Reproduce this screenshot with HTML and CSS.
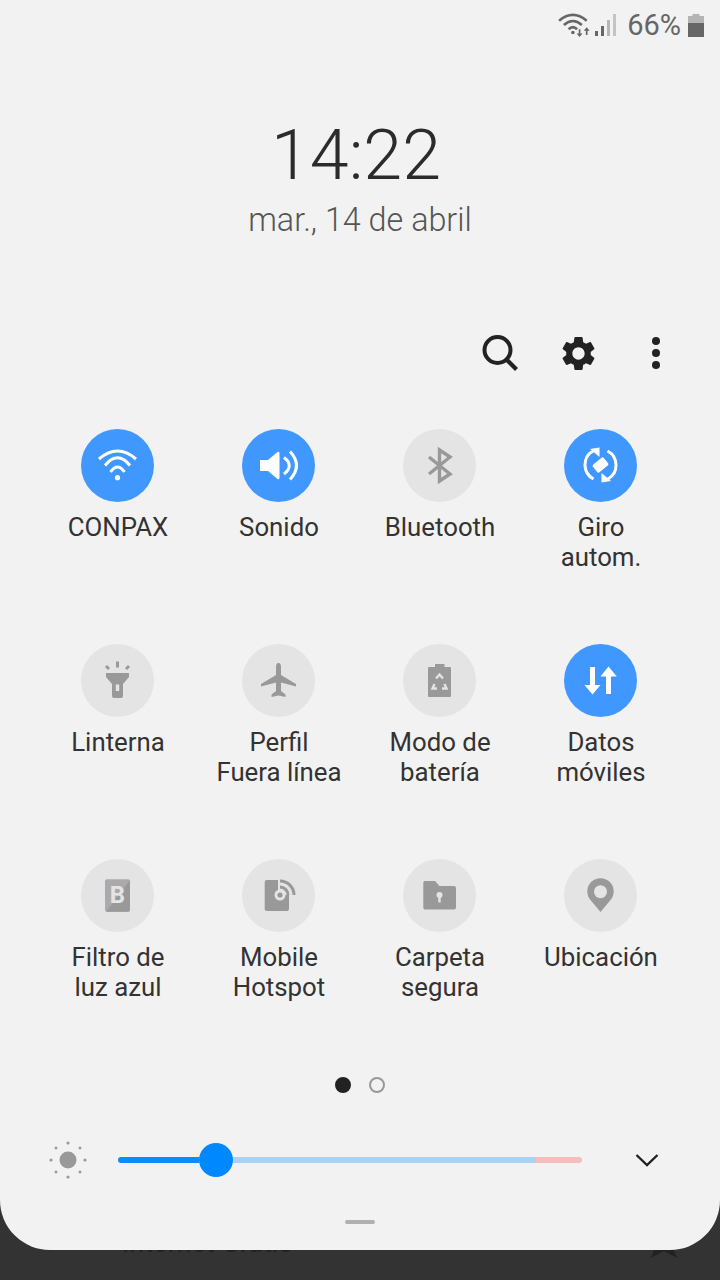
FILE: index.html
```html
<!DOCTYPE html>
<html lang="es">
<head>
    <meta charset="UTF-8">
    <meta name="viewport" content="width=device-width, initial-scale=1.0">
    <title>Panel rápido</title>
    <link rel="stylesheet" href="styles.css">
</head>
<body>

    <div class="panel">
        <!-- Status bar -->
        <div class="status-bar">
            <svg class="st-wifi" viewBox="0 0 32 26" width="34" height="28">
                <g fill="none" stroke="#666" stroke-width="2.4">
                    <path d="M1 9 Q14 -2 27 9"/>
                    <path d="M5.5 13 Q14 5.5 22.5 13"/>
                    <path d="M10 17 Q14 13 18 17"/>
                </g>
                <circle cx="14" cy="20" r="1.7" fill="#666"/>
                <path d="M19.5 17 h1.6 v4 h2 l-2.8 3.4 -2.8 -3.4 h2z" fill="#666"/>
                <path d="M27 15 l2.8 3.4 h-2 v4 h-1.6 v-4 h-2z" fill="#666"/>
            </svg>
            <svg class="st-signal" viewBox="0 0 22 24" width="22" height="24">
                <rect x="0" y="18" width="3" height="5" fill="#666"/>
                <rect x="6" y="13" width="3" height="10" fill="#666"/>
                <rect x="12" y="7" width="3" height="16" fill="#b5b5b5"/>
                <rect x="18" y="1" width="3" height="22" fill="#c4c4c4"/>
            </svg>
            <span class="st-level">66%</span>
            <svg class="st-battery" viewBox="0 0 16 23" width="16" height="23">
                <path d="M4.5 0 H11.5 V2 H16 V9 H0 V2 H4.5Z" fill="#b4b4b4"/>
                <rect x="0" y="9" width="16" height="14" fill="#666"/>
            </svg>
        </div>

        <!-- Clock -->
        <div class="clock">14:22</div>
        <div class="date">mar., 14 de abril</div>

        <!-- Toolbar -->
        <div class="toolbar">
            <button class="tool">
                <svg viewBox="0 0 40 40" width="40" height="40">
                    <circle cx="17.5" cy="17" r="13" fill="none" stroke="#222" stroke-width="4"/>
                    <path d="M27 27 L36.5 36.5" stroke="#222" stroke-width="4.2" fill="none"/>
                </svg>
            </button>
            <button class="tool">
                <svg viewBox="0 0 24 24" width="41" height="41">
                    <path fill="#222" d="M19.14 12.94c.04-.3.06-.61.06-.94 0-.32-.02-.64-.07-.94l2.03-1.58c.18-.14.23-.41.12-.61l-1.92-3.32c-.12-.22-.37-.29-.59-.22l-2.39.96c-.5-.38-1.03-.7-1.62-.94l-.36-2.54c-.04-.24-.24-.41-.48-.41h-3.84c-.24 0-.43.17-.47.41l-.36 2.54c-.59.24-1.13.57-1.62.94l-2.39-.96c-.22-.08-.47 0-.59.22L2.74 8.87c-.12.21-.08.47.12.61l2.03 1.58c-.05.3-.09.63-.09.94s.02.64.07.94l-2.03 1.58c-.18.14-.23.41-.12.61l1.92 3.32c.12.22.37.29.59.22l2.39-.96c.5.38 1.03.7 1.62.94l.36 2.54c.05.24.24.41.48.41h3.84c.24 0 .44-.17.47-.41l.36-2.54c.59-.24 1.13-.56 1.62-.94l2.39.96c.22.08.47 0 .59-.22l1.92-3.32c.12-.22.07-.47-.12-.61l-2.01-1.58zM12 15.6c-1.98 0-3.6-1.62-3.6-3.6s1.62-3.6 3.6-3.6 3.6 1.62 3.6 3.6-1.62 3.6-3.6 3.6z"/>
                </svg>
            </button>
            <button class="tool">
                <svg viewBox="0 0 12 34" width="12" height="34">
                    <circle cx="6" cy="5" r="4" fill="#222"/>
                    <circle cx="6" cy="17" r="4" fill="#222"/>
                    <circle cx="6" cy="29" r="4" fill="#222"/>
                </svg>
            </button>
        </div>

        <!-- Quick settings -->
        <div class="tiles">
            <div class="tile">
                <svg class="disc on" viewBox="0 0 73 73">
                    <g fill="none" stroke="#fff" stroke-width="3">
                        <path d="M18 30 Q36.5 14 55 30"/>
                        <path d="M24 36.5 Q36.5 21 49 36.5"/>
                        <path d="M29.5 43 Q36.5 33 43.5 43"/>
                    </g>
                    <circle cx="36.5" cy="48.7" r="2.6" fill="#fff"/>
                </svg>
                <span class="label">CONPAX</span>
            </div>
            <div class="tile">
                <svg class="disc on" viewBox="0 0 73 73">
                    <path d="M18 31 H26 L35.5 23 Q37.5 22 37.5 24.5 V48.5 Q37.5 51 35.5 50 L26 42 H18Z" fill="#fff"/>
                    <g fill="none" stroke="#fff" stroke-width="3">
                        <path d="M42 28.5 Q52.5 36.5 42 45"/>
                        <path d="M48 22.5 Q61 36.5 48 50.5"/>
                    </g>
                </svg>
                <span class="label">Sonido</span>
            </div>
            <div class="tile">
                <svg class="disc" viewBox="0 0 73 73">
                    <path d="M26 28 L47 45 L36.5 52 V21 L47 28 L26 45" fill="none" stroke="#999" stroke-width="3.4"/>
                </svg>
                <span class="label">Bluetooth</span>
            </div>
            <div class="tile">
                <svg class="disc on" viewBox="0 0 73 73">
                    <g>
                        <path d="M29 22 A16 16 0 0 0 29.5 50" fill="none" stroke="#fff" stroke-width="3"/>
                        <path d="M26 20 L35.5 18.5 L35.5 28Z" fill="#fff"/>
                    </g>
                    <g transform="rotate(180 36.5 36)">
                        <path d="M29 22 A16 16 0 0 0 29.5 50" fill="none" stroke="#fff" stroke-width="3"/>
                        <path d="M26 20 L35.5 18.5 L35.5 28Z" fill="#fff"/>
                    </g>
                    <rect x="29.5" y="31" width="14" height="10" rx="1.5" fill="#fff" transform="rotate(-40 36.5 36)"/>
                </svg>
                <span class="label">Giro<br>autom.</span>
            </div>

            <div class="tile">
                <svg class="disc" viewBox="0 0 73 73">
                    <path d="M35 17.5 H38 V23.5 H35Z M24 23 L26 21 L29 24 L27 26Z M49 23 L47 21 L44 24 L46 26Z" fill="#999"/>
                    <path d="M25 29 H48 V33 L42 40 V52 Q42 54 40 54 H33 Q31 54 31 52 V40 L25 33Z" fill="#999"/>
                    <rect x="34.8" y="40.5" width="3.4" height="6.5" fill="#e4e4e4"/>
                </svg>
                <span class="label">Linterna</span>
            </div>
            <div class="tile">
                <svg class="disc" viewBox="0 0 73 73">
                    <path d="M36.5 19 C34.5 19 34 21 34 23 V31 L19 40 V42.5 L34 38.5 V47 L29.5 50.5 V53 L36.5 51.5 L43.5 53 V50.5 L39 47 V38.5 L54 42.5 V40 L39 31 V23 C39 21 38.5 19 36.5 19Z" fill="#999"/>
                </svg>
                <span class="label">Perfil<br>Fuera línea</span>
            </div>
            <div class="tile">
                <svg class="disc" viewBox="0 0 73 73">
                    <path d="M32 20 H41.5 V23 H47 Q48 23 48 24 V52 Q48 53 47 53 H26 Q25 53 25 52 V24 Q25 23 26 23 H32Z" fill="#999"/>
                    <g fill="none" stroke="#e4e4e4" stroke-width="2.4">
                        <path d="M33 34.5 L36.5 30.5 L40 34.5"/>
                        <path d="M34 44.5 H29.5 L31.5 40"/>
                        <path d="M39 44.5 H43.5 L41.5 40"/>
                    </g>
                </svg>
                <span class="label">Modo de<br>batería</span>
            </div>
            <div class="tile">
                <svg class="disc on" viewBox="0 0 73 73">
                    <path d="M26 23 H31 V41 H36.5 L28.5 50.5 L20.5 41 H26Z" fill="#fff"/>
                    <path d="M42 50 H47 V32.5 H52.8 L44.5 22.5 L36.5 32.5 H42Z" fill="#fff"/>
                </svg>
                <span class="label">Datos<br>móviles</span>
            </div>

            <div class="tile">
                <svg class="disc" viewBox="0 0 73 73">
                    <rect x="24" y="20.3" width="25" height="32.4" rx="2" fill="#aaa"/>
                    <path d="M49 21 V50.7 Q49 52.7 47 52.7 H25Z" fill="#999"/>
                    <text class="tile-b" x="36.5" y="44">B</text>
                </svg>
                <span class="label">Filtro de<br>luz azul</span>
            </div>
            <div class="tile">
                <svg class="disc" viewBox="0 0 73 73">
                    <rect x="22.7" y="21" width="24.3" height="31" rx="2" fill="#999"/>
                    <rect x="36" y="18" width="14" height="18" fill="#e4e4e4"/>
                    <circle cx="38" cy="36" r="5.5" fill="#e4e4e4"/>
                    <circle cx="38" cy="36" r="2.6" fill="#999"/>
                    <g fill="none" stroke="#999" stroke-width="3">
                        <path d="M38 28 A8 8 0 0 1 46 36"/>
                        <path d="M38 22 A14 14 0 0 1 52 36"/>
                    </g>
                </svg>
                <span class="label">Mobile<br>Hotspot</span>
            </div>
            <div class="tile">
                <svg class="disc" viewBox="0 0 73 73">
                    <path d="M22 22 H32 L36.5 27 H51 Q53 27 53 29 V48.5 Q53 50.5 51 50.5 H22 Q20.3 50.5 20.3 48.5 V24 Q20.3 22 22 22Z" fill="#999"/>
                    <circle cx="36.5" cy="36" r="3" fill="#e4e4e4"/>
                    <rect x="35.3" y="36" width="2.4" height="7.5" fill="#e4e4e4"/>
                </svg>
                <span class="label">Carpeta<br>segura</span>
            </div>
            <div class="tile">
                <svg class="disc" viewBox="0 0 73 73">
                    <path d="M36.5 53 L26.5 41 A13.2 13.2 0 1 1 46.5 41Z" fill="#999"/>
                    <circle cx="36.5" cy="32.7" r="6.5" fill="#e4e4e4"/>
                </svg>
                <span class="label">Ubicación</span>
            </div>
        </div>

        <!-- Page dots -->
        <div class="pager">
            <span class="pager-dot active"></span>
            <span class="pager-dot"></span>
        </div>

        <!-- Brightness -->
        <div class="brightness">
            <svg class="sun" viewBox="0 0 40 40" width="40" height="40">
                <circle cx="20" cy="20" r="8.5" fill="#999"/>
                <g fill="#999">
                    <circle cx="20" cy="3" r="1.6"/>
                    <circle cx="20" cy="37" r="1.6"/>
                    <circle cx="3" cy="20" r="1.6"/>
                    <circle cx="37" cy="20" r="1.6"/>
                    <circle cx="8" cy="8" r="1.4"/>
                    <circle cx="32" cy="8" r="1.4"/>
                    <circle cx="8" cy="32" r="1.4"/>
                    <circle cx="32" cy="32" r="1.4"/>
                </g>
            </svg>
            <div class="slider">
                <div class="slider-done"></div>
                <div class="slider-thumb"></div>
                <div class="slider-rest"></div>
                <div class="slider-over"></div>
            </div>
            <svg class="chevron" viewBox="0 0 24 14" width="24" height="14">
                <path d="M1.5 2 L12 12 L22.5 2" fill="none" stroke="#222" stroke-width="2.4"/>
            </svg>
        </div>

        <div class="handle"></div>
    </div>

    <!-- Page behind the panel -->
    <div class="behind">
        <span class="behind-text">Internet Gratis</span>
        <svg class="behind-star" viewBox="0 0 26 8" width="26" height="8">
            <path d="M3 0 L0 8 L13 1 L26 8 L23 0Z" fill="#222"/>
        </svg>
    </div>

</body>
</html>
```

FILE: styles.css
```css
/* Global Styles */
* {
    margin: 0;
    padding: 0;
    box-sizing: border-box;
    font-family: 'Roboto', sans-serif;
}

body {
    background: #333;
    color: #333;
    overflow: hidden;
}

/* Panel */
.panel {
    height: 1250px;
    background: #f2f2f2;
    border-radius: 0 0 50px 50px;
    overflow: hidden;
}

/* Status bar */
.status-bar {
    height: 50px;
    display: flex;
    justify-content: flex-end;
    align-items: center;
    padding-right: 16px;
}

.st-wifi {
    margin-right: 3px;
}

.st-signal {
    margin-right: 10px;
}

.st-level {
    font-size: 29px;
    color: #666;
    margin-right: 7px;
}

/* Clock */
.clock {
    margin-top: 62px;
    height: 86px;
    line-height: 86px;
    padding-right: 8px;
    font-size: 70px;
    font-weight: 300;
    text-align: center;
    color: #2b2b2b;
}

.date {
    height: 44px;
    line-height: 44px;
    font-size: 32.3px;
    font-weight: 300;
    text-align: center;
    color: #555;
}

/* Toolbar */
.toolbar {
    display: flex;
    justify-content: flex-end;
    margin-top: 86px;
    padding-right: 25px;
}

.tool {
    width: 78px;
    height: 50px;
    display: flex;
    align-items: center;
    justify-content: center;
    background: none;
    border: none;
}

/* Tiles */
.tiles {
    display: grid;
    grid-template-columns: repeat(4, 161px);
    grid-auto-rows: 215px;
    margin-top: 51px;
    padding-left: 37px;
}

.tile {
    display: flex;
    flex-direction: column;
    align-items: center;
}

.disc {
    width: 73px;
    height: 73px;
    flex-shrink: 0;
    border-radius: 50%;
    background: #e4e4e4;
}

.disc.on {
    background: #4098ff;
}

.tile-b {
    font-size: 24px;
    font-weight: 700;
    text-anchor: middle;
    fill: #e4e4e4;
}

.label {
    margin-top: 10px;
    padding-left: 1px;
    font-size: 25.8px;
    line-height: 30px;
    text-align: center;
    white-space: nowrap;
    color: #333;
}

/* Pager */
.pager {
    display: flex;
    justify-content: center;
    gap: 18px;
    margin-top: 3px;
}

.pager-dot {
    width: 16px;
    height: 16px;
    border-radius: 50%;
    border: 2px solid #999;
}

.pager-dot.active {
    background: #222;
    border-color: #222;
}

/* Brightness */
.brightness {
    display: flex;
    align-items: center;
    margin-top: 47px;
    padding-left: 48px;
}

.sun {
    margin-right: 30px;
}

.slider {
    width: 464px;
    height: 34px;
    display: flex;
    align-items: center;
}

.slider-done {
    width: 81px;
    height: 6px;
    background: #0a8cff;
    border-radius: 3px 0 0 3px;
}

.slider-thumb {
    width: 34px;
    height: 34px;
    border-radius: 50%;
    background: #0088ff;
}

.slider-rest {
    width: 302px;
    height: 6px;
    background: #aad2f5;
}

.slider-over {
    width: 47px;
    height: 6px;
    background: #f6bdbd;
    border-radius: 0 3px 3px 0;
}

.chevron {
    margin-left: 53px;
}

/* Handle */
.handle {
    width: 30px;
    height: 4px;
    margin: 40px auto 0;
    border-radius: 2px;
    background: #b0b0b0;
}

/* Behind the panel */
.behind {
    height: 30px;
    display: flex;
    overflow: hidden;
    padding-left: 122px;
    padding-right: 43px;
}

.behind-text {
    margin-top: -22px;
    font-size: 27px;
    line-height: 30px;
    color: #222;
}

.behind-star {
    margin-left: auto;
}
```
